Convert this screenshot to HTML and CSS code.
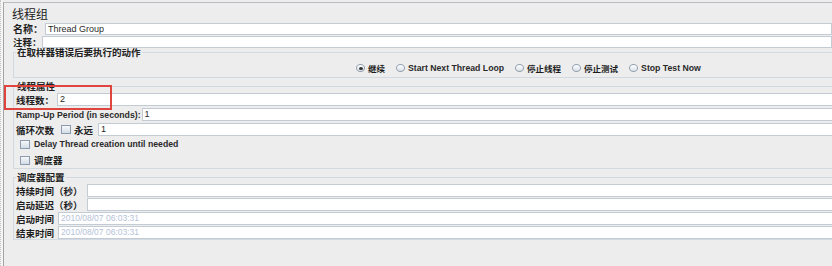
FILE: index.html
```html
<!DOCTYPE html>
<html lang="zh-CN">
<head>
<meta charset="utf-8">
<title>线程组</title>
<link rel="stylesheet" href="styles.css">
</head>
<body>
<div class="window">
  <div class="strip"></div>
  <div class="frame">
    <div class="panel">
      <div class="title">线程组</div>
      <div class="row r-name"><span class="lbl">名称：</span><div class="field">Thread Group</div></div>
      <div class="row r-comment"><span class="lbl">注释：</span><div class="field"></div></div>

      <fieldset class="group g-action">
        <legend>在取样器错误后要执行的动作</legend>
        <div class="radios">
          <span class="opt"><span class="radio on"></span><span class="cn">继续</span></span>
          <span class="opt"><span class="radio"></span><span class="en">Start Next Thread Loop</span></span>
          <span class="opt"><span class="radio"></span><span class="cn">停止线程</span></span>
          <span class="opt"><span class="radio"></span><span class="cn">停止测试</span></span>
          <span class="opt"><span class="radio"></span><span class="en">Stop Test Now</span></span>
        </div>
      </fieldset>

      <fieldset class="group g-props">
        <legend>线程属性</legend>
        <div class="frow first"><span class="lbl">线程数：</span><div class="field">2</div></div>
        <div class="frow"><span class="lbl en ramp">Ramp-Up Period (in seconds):</span><div class="field">1</div></div>
        <div class="frow"><span class="lbl">循环次数</span><span class="check"></span><span class="lbl forever">永远</span><div class="field">1</div></div>
        <div class="crow"><span class="check"></span><span class="en">Delay Thread creation until needed</span></div>
        <div class="crow"><span class="check"></span><span class="lbl">调度器</span></div>
      </fieldset>

      <fieldset class="group g-sched">
        <legend>调度器配置</legend>
        <div class="srow first"><span class="lbl">持续时间（秒）</span><div class="field"></div></div>
        <div class="srow"><span class="lbl">启动延迟（秒）</span><div class="field"></div></div>
        <div class="srow"><span class="lbl">启动时间</span><div class="field off">2010/08/07 06:03:31</div></div>
        <div class="srow"><span class="lbl">结束时间</span><div class="field off">2010/08/07 06:03:31</div></div>
      </fieldset>
    </div>
  </div>
  <div class="highlight"></div>
</div>
</body>
</html>
```

FILE: styles.css
```css
* { box-sizing: border-box; }
html, body { margin: 0; padding: 0; }
body {
  width: 832px;
  height: 266px;
  overflow: hidden;
  background: #ededed;
  font-family: "Noto Sans CJK SC", "Liberation Sans", sans-serif;
  color: #1c1c1c;
}
.window {
  position: relative;
  display: flex;
  width: 832px;
  height: 266px;
  overflow: hidden;
}
.strip {
  width: 3px;
  flex: none;
  background: #f3f3f3;
  border-left: 1px dotted #c4c4c4;
}
.frame {
  flex: 1;
  margin-top: 2px;
  border-left: 1px solid #a4a4a4;
  border-top: 1px solid #b9bdc2;
  background: #ededed;
  min-width: 0;
}
.panel {
  padding: 3px 0 0 8px;
}
.title {
  height: 16px;
  font-size: 12px;
  line-height: 16px;
  color: #222;
}
.lbl {
  font-size: 9.5px;
  font-weight: 700;
  line-height: 12px;
  white-space: nowrap;
  color: #1e1e1e;
}
.en {
  font-family: "Liberation Sans", "DejaVu Sans", sans-serif;
  font-size: 8.7px;
  font-weight: 700;
  line-height: 12px;
  white-space: nowrap;
  color: #2a2a2a;
}
.cn {
  font-size: 8.5px;
  font-weight: 700;
  line-height: 12px;
  white-space: nowrap;
}
.row {
  display: flex;
  align-items: center;
  height: 12px;
  padding-left: 1px;
}
.r-name { margin-top: 1px; }
.r-name .lbl { font-size: 10px; margin-right: 2px; }
.r-comment { margin-top: 1px; }
.r-comment .lbl { margin-right: 0; }
.field {
  flex: 1;
  height: 100%;
  background: #fff;
  border: 1px solid #c3cbd5;
  font-family: "Liberation Sans", sans-serif;
  font-size: 9px;
  line-height: 11px;
  padding-left: 2px;
  color: #2b2b2b;
  white-space: nowrap;
}
.field.off { color: #b4c2d8; font-size: 8.5px; }

.group {
  margin: 0 -40px 0 1px;
  padding: 0 0 0 2px;
  border: 1px solid #d2d9e1;
  min-width: 0;
}
.group legend {
  font-size: 9.5px;
  font-weight: 700;
  line-height: 8px;
  padding: 0 1px;
  margin-left: 0;
  color: #222;
  white-space: nowrap;
}
.radios {
  display: flex;
  align-items: center;
  height: 12px;
  margin: 6px 0 3px 340px;
  gap: 11px;
}
.opt { display: flex; align-items: center; gap: 3px; }
.radio {
  position: relative;
  width: 9px;
  height: 8px;
  border-radius: 50%;
  border: 1px solid #93a0ae;
  background: linear-gradient(#ffffff, #d9e1ea);
  flex: none;
}
.radio.on::after {
  content: "";
  position: absolute;
  left: 1.5px;
  top: 1.5px;
  width: 4px;
  height: 3px;
  border-radius: 50%;
  background: #333;
}
.check {
  width: 10px;
  height: 9px;
  border: 1px solid #8c9bad;
  background: linear-gradient(#f6f8fb, #d3dce6);
  flex: none;
}
.g-props { margin-top: 4px; }
.frow {
  display: flex;
  align-items: center;
  height: 13px;
  margin-top: 2px;
}
.frow.first { margin-top: 3px; }
.frow .lbl { margin-right: 3px; }
.frow .lbl.ramp { margin-right: 1px; }
.frow .check { margin-right: 3px; margin-left: 4px; }
.frow .forever { margin-right: 5px; }
.crow {
  display: flex;
  align-items: center;
  height: 16px;
  padding-left: 4px;
  gap: 4px;
}
.g-sched { margin-top: 4px; }
.srow {
  display: flex;
  align-items: center;
  height: 13px;
  margin-top: 1px;
}
.srow.first { margin-top: 3px; }
.srow .lbl { margin-right: 4px; }
.highlight {
  position: absolute;
  left: 4px;
  top: 85px;
  width: 108px;
  height: 25px;
  border: 2px solid #e0443e;
  pointer-events: none;
}
```
